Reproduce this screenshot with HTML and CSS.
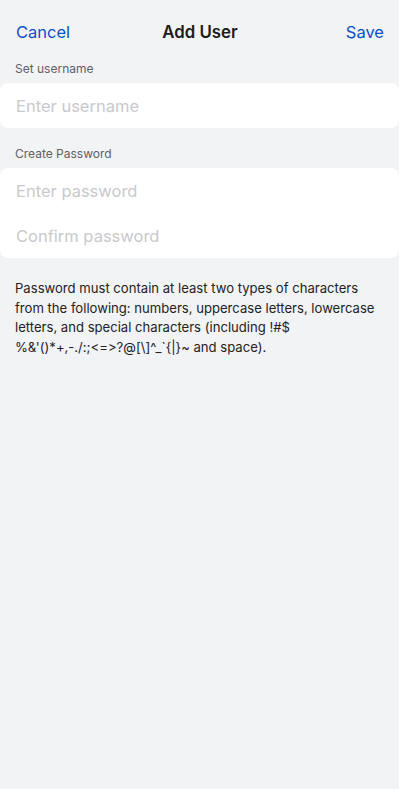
FILE: index.html
```html
<!DOCTYPE html>
<html lang="en">
<head>
    <meta charset="UTF-8">
    <title>Add User</title>
    <meta name="viewport" content="width=device-width, initial-scale=1.0">
    <link rel="stylesheet" href="styles.css">
</head>
<body>
    <div class="nav-bar">
        <button class="nav-btn cancel">Cancel</button>
        <h1>Add User</h1>
        <button class="nav-btn save">Save</button>
    </div>

    <div class="section-label">Set username</div>
    <div class="card">
        <input class="field" type="text" placeholder="Enter username">
    </div>

    <div class="section-label">Create Password</div>
    <div class="card">
        <input class="field" type="password" placeholder="Enter password">
        <input class="field" type="password" placeholder="Confirm password">
    </div>

    <p class="hint">Password must contain at least two types of characters from the following: numbers, uppercase letters, lowercase letters, and special characters (including !#$<br>%&amp;'()*+,-./:;&lt;=&gt;?@[\]^_`{|}~ and space).</p>
</body>
</html>
```

FILE: styles.css
```css
* {
    box-sizing: border-box;
    font-family: Inter, "Noto Sans", sans-serif;
    font-feature-settings: "calt" 0;
}

body {
    background: #f2f3f5;
    margin: 0;
    min-height: 100vh;
}

.nav-bar {
    display: grid;
    grid-template-columns: 1fr auto 1fr;
    align-items: center;
    height: 44px;
    margin-top: 10px;
    padding: 0 15px 0 16px;
}

.nav-bar h1 {
    margin: 0;
    font-size: 16.8px;
    font-weight: 600;
    color: #1c1c1e;
}

.nav-btn {
    background: none;
    border: none;
    padding: 0;
    font-size: 16.5px;
    color: #0a50c8;
    cursor: pointer;
}

.cancel {
    justify-self: start;
}

.save {
    justify-self: end;
}

.section-label {
    font-size: 12px;
    color: #606065;
    padding: 7px 15px 7px;
}

.card {
    background: #fff;
    border-radius: 8px;
    display: flex;
    flex-direction: column;
    margin-bottom: 11px;
}

.field {
    border: none;
    background: transparent;
    height: 45px;
    padding: 0 16px;
    font-size: 16.5px;
    color: #1c1c1e;
    outline: none;
}

.field::placeholder {
    color: #c9c9cc;
}

.hint {
    margin: 21px 15px 0;
    font-size: 13.1px;
    line-height: 19.5px;
    color: #222;
}
```
